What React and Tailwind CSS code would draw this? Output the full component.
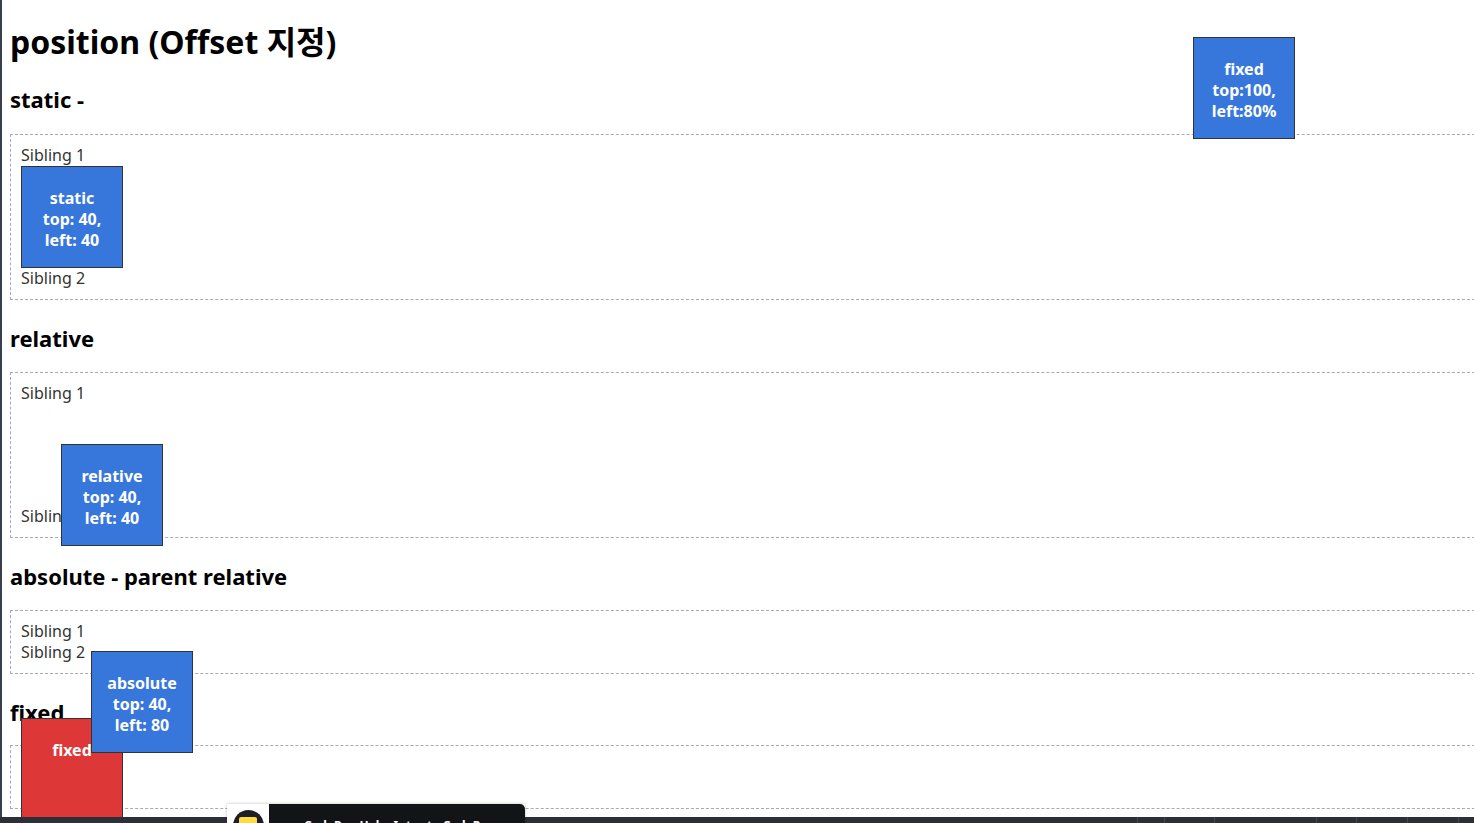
export default function App() {
  const box = 'w-[1490px] shrink-0 border border-dashed border-[#aaa] p-[10px] text-[16px] leading-[21px] text-[#333]';
  const h2 = 'mt-[22px] mb-[17px] text-[22px] font-bold leading-[33px] text-black';
  const tile = 'h-[102px] w-[102px] border border-[#333] bg-[#3777dc] pt-[21px] text-center text-[16px] font-bold leading-[21px] text-white';

  return (
    <div
      className="relative flex h-[823px] w-[1474px] flex-col overflow-hidden bg-white"
      style={{ fontFamily: '"Noto Sans", "Noto Sans CJK KR", sans-serif' }}
    >
      <div className="flex min-h-0 flex-1">
        <div className="w-[2px] bg-[#3b3e4c]" />
        <div className="relative min-w-0 flex-1 overflow-hidden pl-[8px]">
          <h1 className="mt-[20px] h-[44px] text-[32px] font-bold leading-[43px] text-black">position (Offset 지정)</h1>

          <h2 className={h2 + ' !mt-[19px] !mb-[18px]'}>static -</h2>
          <div className={box}>
            <div className="h-[21px]">Sibling 1</div>
            <div className={tile}>
              static<br />top: 40,<br />left: 40
            </div>
            <div className="h-[21px]">Sibling 2</div>
          </div>

          <h2 className={h2}>relative</h2>
          <div className={box}>
            <div className="h-[21px]">Sibling 1</div>
            <div className={tile + ' relative top-[40px] left-[40px]'}>
              relative<br />top: 40,<br />left: 40
            </div>
            <div className="h-[21px]">Sibling 2</div>
          </div>

          <h2 className={h2}>absolute - parent relative</h2>
          <div className={box + ' relative'}>
            <div className="h-[21px]">Sibling 1</div>
            <div className="h-[21px]">Sibling 2</div>
            <div className={tile + ' absolute top-[40px] left-[80px] z-10'}>
              absolute<br />top: 40,<br />left: 80
            </div>
          </div>

          <h2 className={h2 + ' !mb-[16px]'}>fixed</h2>
          <div className={box}>
            <div className="h-[21px]">Sibling 1</div>
            <div className="h-[21px]">Sibling 2</div>
          </div>

          {/* fixed elements */}
          <div className={tile + ' absolute left-[19px] top-[718px] !bg-[#dd3737]'}>fixed</div>
          <div className={tile + ' absolute left-[1191px] top-[37px] z-10'}>
            fixed<br />top:100,<br />left:80%
          </div>
        </div>
      </div>

      <div className="flex h-[6px] shrink-0 bg-[#2b2f3a]">
        <div className="w-[1137px]" />
        <div className="w-[27px] border-l border-[#444857]" />
        <div className="w-[50px] border-l border-[#444857]" />
        <div className="w-[102px] border-l border-[#444857]" />
        <div className="w-[40px] border-l border-[#444857]" />
        <div className="w-[51px] border-l border-[#444857]" />
        <div className="w-[51px] border-l border-[#444857]" />
        <div className="flex-1 border-l border-[#444857]" />
      </div>

      {/* codepen toast peeking from the bottom */}
      <div className="absolute left-[227px] top-[804px] z-20 flex h-[40px] w-[298px] shadow-[0_0_3px_rgba(0,0,0,0.25)]">
        <div className="flex w-[42px] justify-center rounded-tl-[5px] bg-white pt-[6px]">
          <div className="flex h-[31px] w-[31px] justify-center overflow-hidden rounded-full bg-[#1e1f26] pt-[7px]">
            <div className="h-[14px] w-[18px] rounded-[2px] bg-[#ffdd40]" />
          </div>
        </div>
        <div className="flex-1 rounded-tr-[5px] bg-[#131417] pl-[35px] pt-[14px] text-[12px] font-bold leading-[16px] text-white">
          CodePen Help: Intro to CodePen
        </div>
      </div>
    </div>
  );
}
